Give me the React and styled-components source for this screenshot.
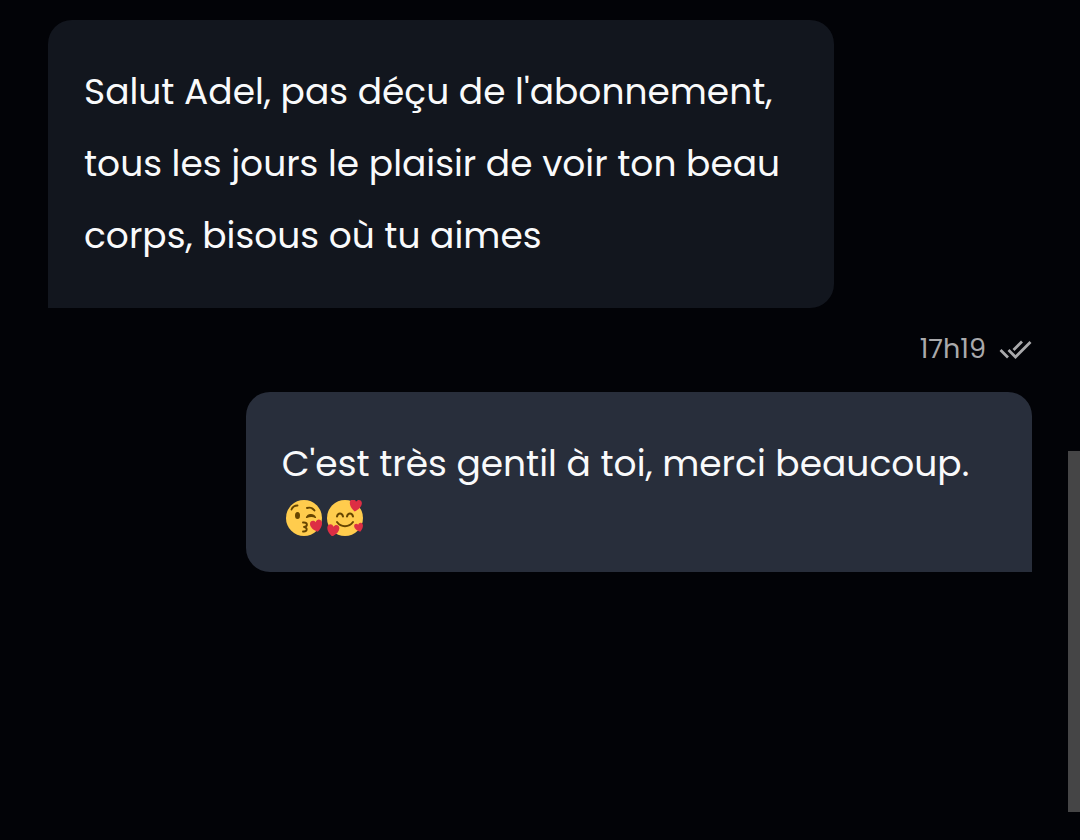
import React from "react";
import styled, { createGlobalStyle } from "styled-components";

const GlobalStyle = createGlobalStyle`
  * { box-sizing: border-box; }
  body {
    margin: 0;
    background: #020307;
    color: #f9fafb;
    font-family: Poppins, Inter, "Liberation Sans", sans-serif;
  }
`;

const Conversation = styled.main`
  display: flex;
  flex-direction: column;
  min-height: 100vh;
  padding: 20px 48px;
`;

const Bubble = styled.article`
  width: calc(80% - 1px);
  padding: 36px;
  align-self: ${(p) => (p.$sent ? "flex-end" : "flex-start")};
  background: ${(p) => (p.$sent ? "#282e3b" : "#12161e")};
  border-radius: ${(p) => (p.$sent ? "24px 24px 0 24px" : "24px 24px 24px 0")};
`;

const Message = styled.p`
  margin: 0;
  font-size: 36px;
  line-height: 72px;
`;

const EmojiRow = styled.div`
  display: flex;
  gap: 5px;
  padding-left: 4px;
`;

const Emoji = styled.svg`
  display: block;
  width: 36px;
  height: 36px;
`;

const Status = styled.div`
  display: flex;
  align-items: center;
  justify-content: flex-end;
  gap: 12px;
  height: 84px;
  padding-bottom: 2px;
  color: #a9a9ab;
`;

const Time = styled.time`
  font-size: 27px;
  font-weight: 400;
  line-height: 36px;
`;

const ReadIcon = styled.svg`
  width: 34px;
  height: 20px;
`;

const ScrollThumb = styled.div`
  position: fixed;
  right: 0;
  bottom: 28px;
  width: 12px;
  height: 43vh;
  background: #454546;
`;

const HEART =
  "M0 4.600C-3.200 2.600-5-.2-4.600-2.500-4.200-4.900-1.200-5.400 0-3 1.200-5.400 4.200-4.900 4.600-2.500 5-.2 3.200 2.600 0 4.600Z";

function KissEmoji() {
  return (
    <Emoji viewBox="0 0 36 36" role="img" aria-label="Visage envoyant un bisou">
      <circle cx="18" cy="18" r="18" fill="#ffcc4d" />
      <ellipse cx="11.500" cy="15.500" rx="2.500" ry="3.500" fill="#664500" />
      <g fill="none" stroke="#664500" strokeWidth="1.900" strokeLinecap="round" strokeLinejoin="round">
        <path d="M5.500 9.500C6.500 7 8.500 5.500 11.500 5.500" />
        <path d="M21 8C24 7 27 8.500 28.500 10.500" />
        <path d="M20.500 17.500C22 13.500 27.500 13.500 29.500 17.500C27 16 24 16 20.500 17.500" fill="#664500" strokeWidth="1.200" />
        <path d="M17 22.500C22 22 22 26.500 18 27C22 27.500 21.500 32 17 31.500" />
      </g>
      <path d={HEART} fill="#dd2e44" transform="translate(30.500 26) rotate(-12) scale(1.300)" />
    </Emoji>
  );
}

function HeartsEmoji() {
  return (
    <Emoji viewBox="0 0 36 36" role="img" aria-label="Visage souriant avec des cœurs">
      <circle cx="18" cy="18" r="18" fill="#ffcc4d" />
      <g fill="none" stroke="#664500" strokeWidth="2" strokeLinecap="round">
        <path d="M10 16.500C11 12.500 15 12.500 16 16.500" />
        <path d="M20 16.500C21 12.500 25 12.500 26 16.500" />
        <path d="M10 22C14 27.500 22 27.500 26 22" />
      </g>
      <g fill="#dd2e44">
        <path d={HEART} transform="translate(28.500 5.500) rotate(8) scale(1.300)" />
        <path d={HEART} transform="translate(6 30.500) rotate(8) scale(1.300)" />
        <path d={HEART} transform="translate(32 27.500) rotate(-16) scale(.95)" />
      </g>
    </Emoji>
  );
}

export default function App() {
  return (
    <>
      <GlobalStyle />
      <Conversation>
        <Bubble>
          <Message>
            Salut Adel, pas déçu de l'abonnement, tous les jours le plaisir de voir ton beau corps, bisous où tu aimes
          </Message>
        </Bubble>
        <Status>
          <Time dateTime="17:19">17h19</Time>
          <ReadIcon viewBox="0 0 34 20" role="img" aria-label="Lu" fill="none" stroke="currentColor" strokeWidth="2.800">
            <path d="M2.500 11L10 18.500M10.500 11L17.500 18L32.500 3M15.500 11L24 2.500" />
          </ReadIcon>
        </Status>
        <Bubble $sent>
          <Message>C'est très gentil à toi, merci beaucoup.</Message>
          <EmojiRow>
            <KissEmoji />
            <HeartsEmoji />
          </EmojiRow>
        </Bubble>
      </Conversation>
      <ScrollThumb aria-hidden="true" />
    </>
  );
}
